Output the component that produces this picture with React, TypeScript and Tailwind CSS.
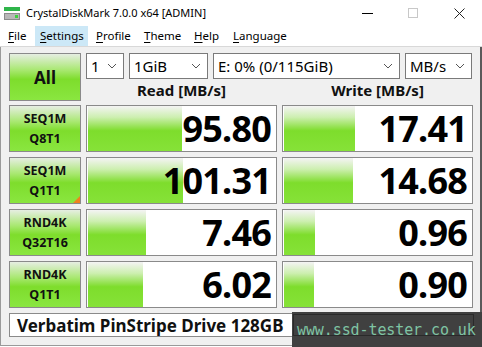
import React from "react";

const font = { fontFamily: '"Noto Sans", "Open Sans", sans-serif' };

type Row = { l1: string; l2: string; read: string; write: string; rw: number; ww: number; mark?: boolean };

const rows: Row[] = [
  { l1: "SEQ1M", l2: "Q8T1", read: "95.80", write: "17.41", rw: 94, ww: 71 },
  { l1: "SEQ1M", l2: "Q1T1", read: "101.31", write: "14.68", rw: 95, ww: 69, mark: true },
  { l1: "RND4K", l2: "Q32T16", read: "7.46", write: "0.96", rw: 58, ww: 31 },
  { l1: "RND4K", l2: "Q1T1", read: "6.02", write: "0.90", rw: 55, ww: 30 },
];

const btn =
  "relative shrink-0 border border-[#8a8a8a] bg-[linear-gradient(to_bottom,#e6eee2_0%,#a8e870_35%,#7edd2c_55%,#8ae640_100%)] flex flex-col items-center justify-center text-[#111] font-bold";

const menu = [
  { k: "F", rest: "ile", w: "w-[32px]" },
  { k: "S", rest: "ettings", w: "w-[53px]", hot: true },
  { k: "P", rest: "rofile", w: "w-[48px] ml-[3px]" },
  { k: "T", rest: "heme", w: "w-[50px]" },
  { k: "H", rest: "elp", w: "w-[39px]" },
  { k: "L", rest: "anguage", w: "w-[70px]" },
];

function Combo({ w, label }: { w: string; label: string }) {
  return (
    <div className={`${w} h-[26px] border border-[#7a7a7a] bg-white flex items-center justify-between pl-[4px] pr-[6px]`}>
      <span className="text-[15px] text-black leading-none">{label}</span>
      <svg width="10" height="6" viewBox="0 0 10 6">
        <path d="M1 1 L5 5 L9 1" fill="none" stroke="#555" strokeWidth="1" />
      </svg>
    </div>
  );
}

function Cell({ w, value, bar }: { w: string; value: string; bar: number }) {
  return (
    <div className={`${w} relative h-[47px] border border-[#8a8a8a] bg-white`}>
      <div
        className="absolute left-[1px] top-0 bottom-0 bg-[linear-gradient(to_bottom,#f4f4f4_0%,#cdefb0_25%,#7edd2c_55%,#86e238_100%)]"
        style={{ width: bar }}
      />
      <div className="relative h-full flex items-center justify-end pr-[5px]">
        <span className="text-[36px] font-bold text-black leading-none tracking-[-0.8px]">{value}</span>
      </div>
    </div>
  );
}

export default function App() {
  return (
    <div className="relative w-[482px] h-[347px] overflow-hidden bg-white" style={font}>
      {/* title bar */}
      <div className="h-[26px] flex items-center">
        <svg className="ml-[4px] mr-[6px]" width="16" height="16" viewBox="0 0 16 16">
          <rect x="0" y="2" width="16" height="4" fill="#2fb54a" />
          <rect x="0" y="8" width="16" height="7" fill="#8c8c8c" />
          <rect x="1" y="9" width="14" height="5" fill="#b8b8b8" />
          <rect x="11" y="10" width="3" height="3" fill="#3fd040" />
        </svg>
        <span className="text-[11px] text-black">CrystalDiskMark 7.0.0 x64 [ADMIN]</span>
        <div className="ml-auto flex items-center h-full">
          <div className="w-[46px] flex justify-center">
            <div className="w-[11px] h-[1px] bg-black" />
          </div>
          <div className="w-[46px] flex justify-center">
            <div className="w-[10px] h-[10px] border border-[#c8c8c8]" />
          </div>
          <div className="w-[46px] flex justify-center">
            <svg width="11" height="11" viewBox="0 0 11 11">
              <path d="M0.5 0.5 L10.5 10.5 M10.5 0.5 L0.5 10.5" stroke="#222" strokeWidth="1" />
            </svg>
          </div>
        </div>
      </div>
      {/* menu */}
      <div className="h-[21px] flex items-stretch pl-[3px] text-[11.5px] text-black border-b border-[#d8d8d8]">
        {menu.map((m) => (
          <div
            key={m.k}
            className={`${m.w} pl-[5px] flex items-center ${m.hot ? "bg-[#cce8f7]" : ""}`}
          >
            <span className="underline underline-offset-2">{m.k}</span>
            {m.rest}
          </div>
        ))}
      </div>
      {/* content */}
      <div className="h-[299px] bg-[#f0f0f0] border-l border-[#9a9a9a] border-r-[2px] border-r-[#5a5a5a] border-b border-b-[#9a9a9a] pl-[8px] pt-[6px] flex flex-col gap-[4px]">
        <div className="flex gap-[5px]">
          <div className={`${btn} w-[72px] h-[48px]`}>
            <span className="text-[17px] leading-none">All</span>
          </div>
          <div className="flex flex-col">
            <div className="flex gap-[5px]">
              <Combo w="w-[38px]" label="1" />
              <Combo w="w-[79px]" label="1GiB" />
              <Combo w="w-[187px]" label="E: 0% (0/115GiB)" />
              <Combo w="w-[67px]" label="MB/s" />
            </div>
            <div className="h-[22px] flex gap-[5px] font-bold text-[15px] text-[#111]">
              <div className="w-[191px] text-center leading-[22px]">Read [MB/s]</div>
              <div className="w-[191px] text-center leading-[22px]">Write [MB/s]</div>
            </div>
          </div>
        </div>
        <div className="flex flex-col gap-[5px]">
          {rows.map((r, i) => (
            <div key={i} className="flex gap-[5px]">
              <div className={`${btn} w-[72px] h-[47px] gap-[1px]`}>
                <span className="text-[12.5px] leading-[19px]">{r.l1}</span>
                <span className="text-[12.5px] leading-[19px]">{r.l2}</span>
                {r.mark && (
                  <div className="absolute right-0 bottom-0 w-0 h-0 border-l-[7px] border-l-transparent border-b-[7px] border-b-[#f08020]" />
                )}
              </div>
              <Cell w="w-[191px]" value={r.read} bar={r.rw} />
              <Cell w="w-[191px]" value={r.write} bar={r.ww} />
            </div>
          ))}
        </div>
        <div className="mt-[1px] w-[463px] h-[24px] border border-[#8a8a8a] bg-white flex items-center pl-[7px]">
          <span className="text-[17px] font-bold text-[#111] leading-none">Verbatim PinStripe Drive 128GB</span>
        </div>
      </div>
      {/* watermark */}
      <div className="absolute left-[292px] top-[312px] w-[190px] h-[35px] bg-[#404040]">
        <div className="ml-[1px] mt-[2px] w-[181px] h-[22px] border border-[#2a2a2a]" />
        <div
          className="absolute left-[5px] top-[11px] text-[15px] text-[#7fc4a4] leading-none tracking-[-0.1px]"
          style={{ fontFamily: '"DejaVu Sans Mono", "Liberation Mono", monospace' }}
        >
          www.ssd-tester.co.uk
        </div>
      </div>
    </div>
  );
}
